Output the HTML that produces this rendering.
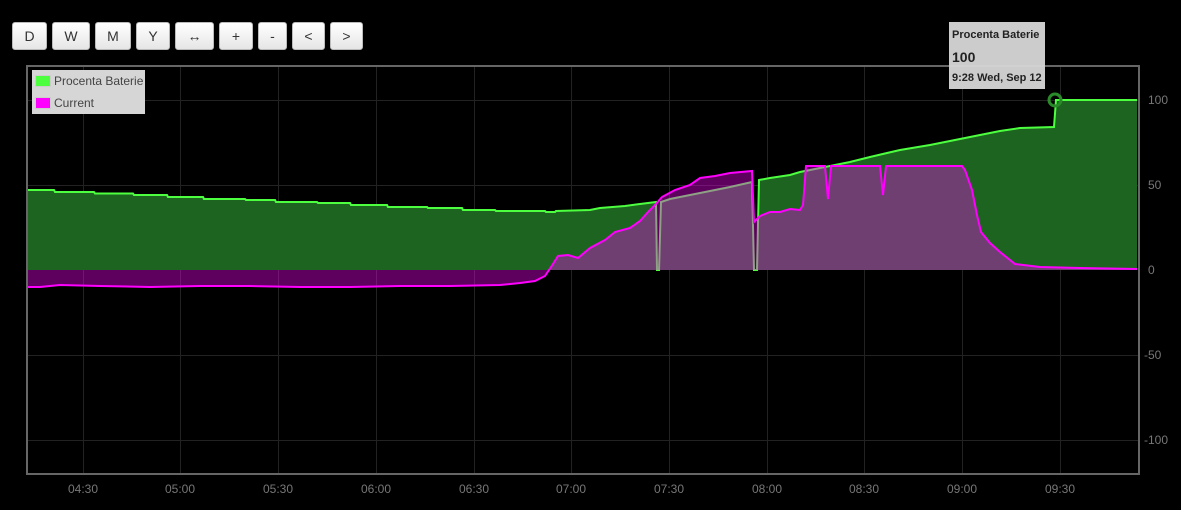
<!DOCTYPE html>
<html><head><style>
body{margin:0;background:#000;width:1181px;height:510px;overflow:hidden;font-family:"Liberation Sans",sans-serif;position:relative}
.b{position:absolute;top:22px;height:28px;background:linear-gradient(#fff,#e6e6e6);border:1px solid #bbb;border-radius:3px;box-sizing:border-box;font-size:14px;color:#333;text-align:center;line-height:26px}
.lg{position:absolute;left:32px;top:70px;width:113px;height:44px;background:#d6d6d6;font-size:12px;color:#444}
.lg div{position:absolute;left:22px}
.sw{position:absolute;left:3px;width:14px;height:10px;border:1px solid #ccc}
.tt{position:absolute;left:949px;top:22px;width:96px;height:67px;background:rgba(215,215,215,.95);color:#222;font-weight:bold}
</style></head><body>
<div class="b" style="left:12px;width:35px">D</div>
<div class="b" style="left:52px;width:38px">W</div>
<div class="b" style="left:95px;width:36px">M</div>
<div class="b" style="left:136px;width:34px">Y</div>
<div class="b" style="left:175px;width:39px">&#8596;</div>
<div class="b" style="left:219px;width:34px">+</div>
<div class="b" style="left:258px;width:29px">-</div>
<div class="b" style="left:292px;width:33px">&lt;</div>
<div class="b" style="left:330px;width:33px">&gt;</div>
<svg width="1181" height="510" style="position:absolute;left:0;top:0;z-index:-1">
<g stroke="#222" stroke-width="1">
<line x1="27" y1="100.5" x2="1139" y2="100.5"/><line x1="27" y1="185.5" x2="1139" y2="185.5"/><line x1="27" y1="355.5" x2="1139" y2="355.5"/><line x1="27" y1="440.5" x2="1139" y2="440.5"/>
<line x1="83.5" y1="66" x2="83.5" y2="474"/><line x1="180.5" y1="66" x2="180.5" y2="474"/><line x1="278.5" y1="66" x2="278.5" y2="474"/><line x1="376.5" y1="66" x2="376.5" y2="474"/><line x1="474.5" y1="66" x2="474.5" y2="474"/><line x1="571.5" y1="66" x2="571.5" y2="474"/><line x1="669.5" y1="66" x2="669.5" y2="474"/><line x1="767.5" y1="66" x2="767.5" y2="474"/><line x1="864.5" y1="66" x2="864.5" y2="474"/><line x1="962.5" y1="66" x2="962.5" y2="474"/><line x1="1060.5" y1="66" x2="1060.5" y2="474"/>
</g>
<polygon fill="#1d6420" points="27,270 27,190 54,190 55,192 94,192 95,193.5 133,193.5 134,195 167,195 168,197 203,197 204,199 245,199 246,200 275,200 276,202 317,202 318,203 350,203 351,205 387,205 388,207 427,207 428,208 462,208 463,210 495,210 496,211 545,211 546,212 555,212 556,211 590,210 600,208 625,206 640,204 656,202 657,270 659,270 661,202 670,199 690,195 710,191 730,187 752,182 754,270 757,270 759,180 770,178 790,175 800,172 830,166 850,162 870,157 900,150 930,145 950,141 980,135 1000,131 1020,128 1054,127 1056,100 1137,100 1137,270"/>
<polyline fill="none" stroke="#4cff3f" stroke-width="2" points="27,190 54,190 55,192 94,192 95,193.5 133,193.5 134,195 167,195 168,197 203,197 204,199 245,199 246,200 275,200 276,202 317,202 318,203 350,203 351,205 387,205 388,207 427,207 428,208 462,208 463,210 495,210 496,211 545,211 546,212 555,212 556,211 590,210 600,208 625,206 640,204 656,202 657,270 659,270 661,202 670,199 690,195 710,191 730,187 752,182 754,270 757,270 759,180 770,178 790,175 800,172 830,166 850,162 870,157 900,150 930,145 950,141 980,135 1000,131 1020,128 1054,127 1056,100 1137,100"/>
<polygon fill="rgba(255,0,255,0.37)" points="27,270 27,287 40,287 60,285 100,286 150,287 200,286 250,286 300,287 350,287 400,286 450,286 500,285 520,283 535,281 545,276 553,264 558,256 568,255 578,258 590,248 605,240 615,232 630,228 640,221 648,212 655,205 662,197 675,190 690,185 700,178 715,176 730,173 752,171 754,222 760,216 770,212 780,212 790,209 800,210 803,205 806,166 825,166 828,199 831,166 880,166 883,195 886,166 962,166 965,170 972,190 977,215 981,232 990,243 1000,252 1010,260 1015,264 1040,267 1080,268 1137,269 1137,270"/>
<polyline fill="none" stroke="#f0f" stroke-width="2" points="27,287 40,287 60,285 100,286 150,287 200,286 250,286 300,287 350,287 400,286 450,286 500,285 520,283 535,281 545,276 553,264 558,256 568,255 578,258 590,248 605,240 615,232 630,228 640,221 648,212 655,205 662,197 675,190 690,185 700,178 715,176 730,173 752,171 754,222 760,216 770,212 780,212 790,209 800,210 803,205 806,166 825,166 828,199 831,166 880,166 883,195 886,166 962,166 965,170 972,190 977,215 981,232 990,243 1000,252 1010,260 1015,264 1040,267 1080,268 1137,269"/>
<circle cx="1055" cy="100" r="6" fill="none" stroke="#2a8a2a" stroke-width="3"/>
<rect x="27" y="66" width="1112" height="408" fill="none" stroke="#666" stroke-width="2"/>
<g fill="#777" font-size="12" font-family="Liberation Sans,sans-serif">
<text x="1148" y="104">100</text><text x="1148" y="189">50</text><text x="1148" y="274">0</text><text x="1144" y="359">-50</text><text x="1144" y="444">-100</text>
<g text-anchor="middle"><text x="83" y="493">04:30</text><text x="180" y="493">05:00</text><text x="278" y="493">05:30</text><text x="376" y="493">06:00</text><text x="474" y="493">06:30</text><text x="571" y="493">07:00</text><text x="669" y="493">07:30</text><text x="767" y="493">08:00</text><text x="864" y="493">08:30</text><text x="962" y="493">09:00</text><text x="1060" y="493">09:30</text></g>
</g>
</svg>
<div class="lg"><span class="sw" style="top:5px;background:#4cff3f"></span><div style="top:4px">Procenta Baterie</div><span class="sw" style="top:27px;background:#f0f"></span><div style="top:26px">Current</div></div>
<div class="tt"><div style="position:absolute;left:3px;top:7px;font-size:11px">Procenta Baterie</div><div style="position:absolute;left:3px;top:27px;font-size:14px">100</div><div style="position:absolute;left:3px;top:50px;font-size:11px">9:28 Wed, Sep 12</div></div>
</body></html>
